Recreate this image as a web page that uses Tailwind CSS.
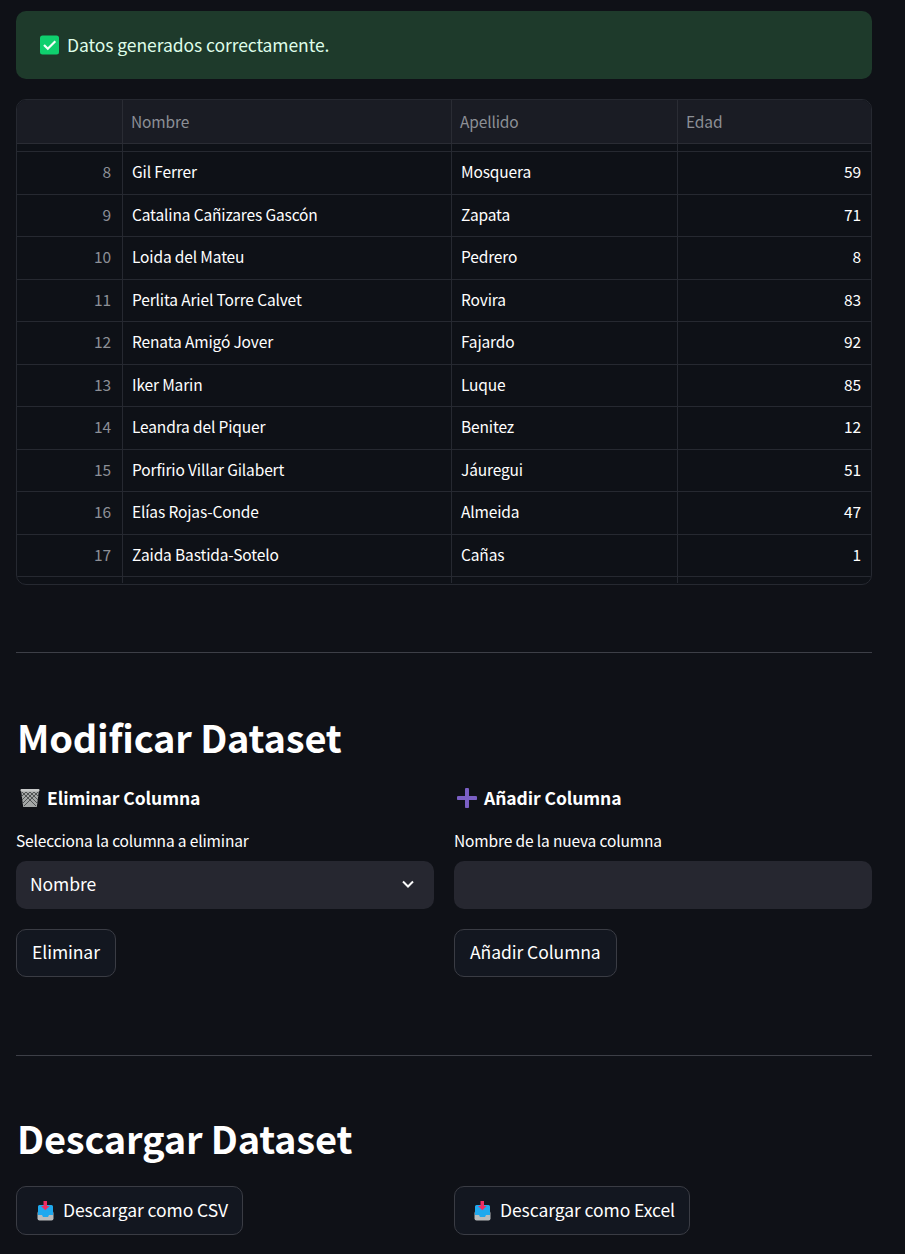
<!DOCTYPE html>
<html lang="es">
<head>
  <meta charset="UTF-8" />
  <meta name="viewport" content="width=device-width, initial-scale=1" />
  <title>Dataset</title>
  <script src="https://cdn.jsdelivr.net/npm/@tailwindcss/browser@4"></script>
</head>
<body class="bg-[#0f1117] text-white font-['Noto_Sans_CJK_JP','Source_Sans_Pro',sans-serif] h-[1254px] overflow-hidden">
  <main class="w-[856px] ml-4 pt-[11px]">

    <!-- Alerta -->
    <div class="h-[68px] rounded-[10px] bg-[#1e3a2b] flex items-center pl-6 gap-[7px] text-[#dffde9] text-[17.5px] tracking-[-0.07px]">
      <svg width="20" height="20" viewBox="0 0 20 20">
        <rect width="19" height="19" x="0" y="0.5" rx="2.5" fill="#0fd06e" />
        <path d="M4 10l3.800 3.800 7.500-7.500" fill="none" stroke="#f4fff8" stroke-width="2.200" />
      </svg>
      <span>Datos generados correctamente.</span>
    </div>

    <!-- Tabla -->
    <div class="mt-5 h-[486px] rounded-[10px] border border-[#262931] overflow-hidden text-[15.5px] tracking-[-0.14px] bg-[#0e1117]">
      <div class="grid grid-cols-[106px_329px_226px_1fr] h-[44px] bg-[#1a1c24] text-[#8c8f96] border-b border-[#2a2c34] leading-[42px]">
        <div class="border-r border-[#2a2c34]"></div>
        <div class="border-r border-[#2a2c34] pl-[8px]">Nombre</div>
        <div class="border-r border-[#2a2c34] pl-[8px]">Apellido</div>
        <div class="pl-[8px]">Edad</div>
      </div>
      <div class="grid grid-cols-[106px_329px_226px_1fr] h-[8px] border-b border-[#262931]">
        <div class="border-r border-[#262931]"></div>
        <div class="border-r border-[#262931]"></div>
        <div class="border-r border-[#262931]"></div>
        <div></div>
      </div>
      <div class="grid grid-cols-[106px_329px_226px_1fr] h-[42.5px] border-b border-[#262931] leading-[38px]">
        <div class="border-r border-[#262931] text-right pr-[11px] text-[#8c8f96]">8</div>
        <div class="border-r border-[#262931] pl-[9px]">Gil Ferrer</div>
        <div class="border-r border-[#262931] pl-[9px]">Mosquera</div>
        <div class="text-right pr-[10px]">59</div>
      </div>
      <div class="grid grid-cols-[106px_329px_226px_1fr] h-[42.5px] border-b border-[#262931] leading-[38px]">
        <div class="border-r border-[#262931] text-right pr-[11px] text-[#8c8f96]">9</div>
        <div class="border-r border-[#262931] pl-[9px]">Catalina Cañizares Gascón</div>
        <div class="border-r border-[#262931] pl-[9px]">Zapata</div>
        <div class="text-right pr-[10px]">71</div>
      </div>
      <div class="grid grid-cols-[106px_329px_226px_1fr] h-[42.5px] border-b border-[#262931] leading-[38px]">
        <div class="border-r border-[#262931] text-right pr-[11px] text-[#8c8f96]">10</div>
        <div class="border-r border-[#262931] pl-[9px]">Loida del Mateu</div>
        <div class="border-r border-[#262931] pl-[9px]">Pedrero</div>
        <div class="text-right pr-[10px]">8</div>
      </div>
      <div class="grid grid-cols-[106px_329px_226px_1fr] h-[42.5px] border-b border-[#262931] leading-[38px]">
        <div class="border-r border-[#262931] text-right pr-[11px] text-[#8c8f96]">11</div>
        <div class="border-r border-[#262931] pl-[9px]">Perlita Ariel Torre Calvet</div>
        <div class="border-r border-[#262931] pl-[9px]">Rovira</div>
        <div class="text-right pr-[10px]">83</div>
      </div>
      <div class="grid grid-cols-[106px_329px_226px_1fr] h-[42.5px] border-b border-[#262931] leading-[38px]">
        <div class="border-r border-[#262931] text-right pr-[11px] text-[#8c8f96]">12</div>
        <div class="border-r border-[#262931] pl-[9px]">Renata Amigó Jover</div>
        <div class="border-r border-[#262931] pl-[9px]">Fajardo</div>
        <div class="text-right pr-[10px]">92</div>
      </div>
      <div class="grid grid-cols-[106px_329px_226px_1fr] h-[42.5px] border-b border-[#262931] leading-[38px]">
        <div class="border-r border-[#262931] text-right pr-[11px] text-[#8c8f96]">13</div>
        <div class="border-r border-[#262931] pl-[9px]">Iker Marin</div>
        <div class="border-r border-[#262931] pl-[9px]">Luque</div>
        <div class="text-right pr-[10px]">85</div>
      </div>
      <div class="grid grid-cols-[106px_329px_226px_1fr] h-[42.5px] border-b border-[#262931] leading-[38px]">
        <div class="border-r border-[#262931] text-right pr-[11px] text-[#8c8f96]">14</div>
        <div class="border-r border-[#262931] pl-[9px]">Leandra del Piquer</div>
        <div class="border-r border-[#262931] pl-[9px]">Benitez</div>
        <div class="text-right pr-[10px]">12</div>
      </div>
      <div class="grid grid-cols-[106px_329px_226px_1fr] h-[42.5px] border-b border-[#262931] leading-[38px]">
        <div class="border-r border-[#262931] text-right pr-[11px] text-[#8c8f96]">15</div>
        <div class="border-r border-[#262931] pl-[9px]">Porfirio Villar Gilabert</div>
        <div class="border-r border-[#262931] pl-[9px]">Jáuregui</div>
        <div class="text-right pr-[10px]">51</div>
      </div>
      <div class="grid grid-cols-[106px_329px_226px_1fr] h-[42.5px] border-b border-[#262931] leading-[38px]">
        <div class="border-r border-[#262931] text-right pr-[11px] text-[#8c8f96]">16</div>
        <div class="border-r border-[#262931] pl-[9px]">Elías Rojas-Conde</div>
        <div class="border-r border-[#262931] pl-[9px]">Almeida</div>
        <div class="text-right pr-[10px]">47</div>
      </div>
      <div class="grid grid-cols-[106px_329px_226px_1fr] h-[42.5px] border-b border-[#262931] leading-[38px]">
        <div class="border-r border-[#262931] text-right pr-[11px] text-[#8c8f96]">17</div>
        <div class="border-r border-[#262931] pl-[9px]">Zaida Bastida-Sotelo</div>
        <div class="border-r border-[#262931] pl-[9px]">Cañas</div>
        <div class="text-right pr-[10px]">1</div>
      </div>
      <div class="grid grid-cols-[106px_329px_226px_1fr] h-[6px]">
        <div class="border-r border-[#262931]"></div>
        <div class="border-r border-[#262931]"></div>
        <div class="border-r border-[#262931]"></div>
        <div></div>
      </div>
    </div>

    <hr class="mt-[67px] border-t border-[#3d3f47]" />

    <!-- Modificar -->
    <h2 class="mt-[54px] ml-[1px] text-[38px] tracking-[-0.2px] leading-[60px] font-semibold">Modificar Dataset</h2>

    <div class="mt-[18px] grid grid-cols-2 gap-5">
      <section>
        <h3 class="flex items-center gap-[7px] ml-[4px] h-[26px] text-[17.5px] tracking-[-0.07px] font-bold">
          <svg width="20" height="20" viewBox="0 0 20 20">
            <path d="M1 1.500h18l-2.200 17.500H3.200z" fill="#a4a7a7" />
            <path d="M2 4l14 14M6 4l11.500 11.500M10 4l8 8M14 4l4.500 4.500M18 4L4 18M14 4L2.500 15.500M10 4l-8 8M6 4L1.500 8.500" stroke="#515455" stroke-width="1" fill="none" />
            <rect x="0.500" y="1" width="19" height="2.500" rx="1" fill="#c6c8c8" />
          </svg>
          Eliminar Columna
        </h3>
        <label class="block mt-[17px] text-[15.5px] tracking-[-0.14px] leading-[24px]">Selecciona la columna a eliminar</label>
        <div class="mt-[9px] h-[48px] rounded-[10px] bg-[#262730] flex items-center justify-between pl-[14px] pr-[18px] pb-[2px] text-[17.5px] tracking-[-0.07px]">
          <span>Nombre</span>
          <svg width="16" height="16" viewBox="0 0 16 16"><path d="M3 5.500l5 5 5-5" fill="none" stroke="#fafafa" stroke-width="2" /></svg>
        </div>
        <button class="mt-5 h-[48px] px-[15px] pb-[2px] rounded-[10px] border border-[#3a3c44] bg-[#131720] text-[17.5px] tracking-[-0.07px]">Eliminar</button>
      </section>
      <section>
        <h3 class="flex items-center gap-[7px] ml-[3px] h-[26px] text-[17.5px] tracking-[-0.07px] font-bold">
          <svg width="20" height="20" viewBox="0 0 20 20"><path d="M10 1.500v17M1.500 10h17" stroke="#7a5fc4" stroke-width="4" stroke-linecap="round" /></svg>
          Añadir Columna
        </h3>
        <label class="block mt-[17px] text-[15.5px] tracking-[-0.14px] leading-[24px]">Nombre de la nueva columna</label>
        <div class="mt-[9px] h-[48px] rounded-[10px] bg-[#262730]"></div>
        <button class="mt-5 h-[48px] px-[15px] pb-[2px] rounded-[10px] border border-[#3a3c44] bg-[#131720] text-[17.5px] tracking-[-0.07px]">Añadir Columna</button>
      </section>
    </div>

    <hr class="mt-[78px] border-t border-[#3d3f47]" />

    <!-- Descargar -->
    <h2 class="mt-[52px] ml-[1px] text-[38px] tracking-[-0.2px] leading-[60px] font-semibold">Descargar Dataset</h2>

    <div class="mt-[18px] grid grid-cols-2 gap-5">
      <div>
        <button class="h-[49px] pl-[20px] pr-[14px] rounded-[10px] border border-[#3a3c44] bg-[#131720] text-[17.5px] tracking-[-0.07px] inline-flex items-center gap-[9px]">
          <svg width="17" height="20" viewBox="0 0 17 20">
            <rect x="0.500" y="10" width="16" height="9.500" rx="2" fill="#b9bcbc" />
            <path d="M2.500 4h12a1.500 1.500 0 0 1 1.500 1.500V14h-4l-1 2H6l-1-2H1V5.500A1.500 1.500 0 0 1 2.500 4z" fill="#1fa9ee" />
            <path d="M6.500 0h3.500v5h2.500l-4.200 4.200L4 5h2.500z" fill="#f02d62" />
          </svg>
          Descargar como CSV
        </button>
      </div>
      <div>
        <button class="h-[49px] pl-[19px] pr-[14px] rounded-[10px] border border-[#3a3c44] bg-[#131720] text-[17.5px] tracking-[-0.07px] inline-flex items-center gap-[9px]">
          <svg width="17" height="20" viewBox="0 0 17 20">
            <rect x="0.500" y="10" width="16" height="9.500" rx="2" fill="#b9bcbc" />
            <path d="M2.500 4h12a1.500 1.500 0 0 1 1.500 1.500V14h-4l-1 2H6l-1-2H1V5.500A1.500 1.500 0 0 1 2.500 4z" fill="#1fa9ee" />
            <path d="M6.500 0h3.500v5h2.500l-4.200 4.200L4 5h2.500z" fill="#f02d62" />
          </svg>
          Descargar como Excel
        </button>
      </div>
    </div>
  </main>
</body>
</html>
